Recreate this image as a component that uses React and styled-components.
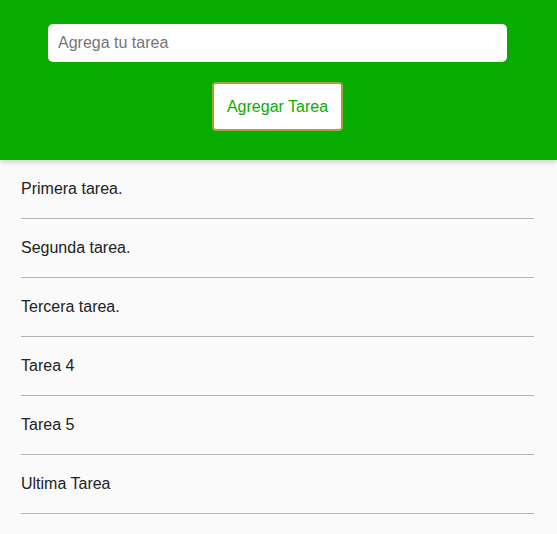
import React from "react";
import styled, { createGlobalStyle } from "styled-components";

const Global = createGlobalStyle`
  html, body { margin: 0; padding: 0; background: #fafafa; }
  body { font-family: "Liberation Sans", Arial, sans-serif; }
`;

const Header = styled.header`
  background: #06ad00;
  height: 160px;
  box-sizing: border-box;
  padding-top: 24px;
  display: flex;
  flex-direction: column;
  align-items: center;
  box-shadow: 0 2px 6px rgba(0, 0, 0, 0.18);
  position: relative;
`;

const Input = styled.input`
  box-sizing: border-box;
  width: 459px;
  height: 38px;
  margin-right: 2px;
  border: none;
  border-radius: 5px;
  padding: 0 10px;
  font-family: "Liberation Sans", Arial, sans-serif;
  font-size: 16px;
  color: #333;
  background: #fff;
  outline: none;
  &::placeholder { color: #757575; }
`;

const Button = styled.button`
  box-sizing: border-box;
  margin-top: 20px;
  margin-right: 2px;
  width: 131px;
  height: 49px;
  background: #fff;
  border: 2px solid #a3a337;
  border-radius: 4px;
  color: #06ad00;
  font-family: "Liberation Sans", Arial, sans-serif;
  font-size: 16px;
  cursor: pointer;
`;

const List = styled.ul`
  list-style: none;
  margin: 0;
  padding: 0 23px 0 21px;
`;

const Item = styled.li`
  padding: 20px 0;
  line-height: 18px;
  font-size: 16px;
  color: #222;
  border-bottom: 1px solid #b3b3b3;
`;

const tasks = [
  "Primera tarea.",
  "Segunda tarea.",
  "Tercera tarea.",
  "Tarea 4",
  "Tarea 5",
  "Ultima Tarea",
];

export default function App() {
  return (
    <>
      <Global />
      <Header>
        <Input placeholder="Agrega tu tarea" />
        <Button>Agregar Tarea</Button>
      </Header>
      <List>
        {tasks.map((t) => (
          <Item key={t}>{t}</Item>
        ))}
      </List>
    </>
  );
}
